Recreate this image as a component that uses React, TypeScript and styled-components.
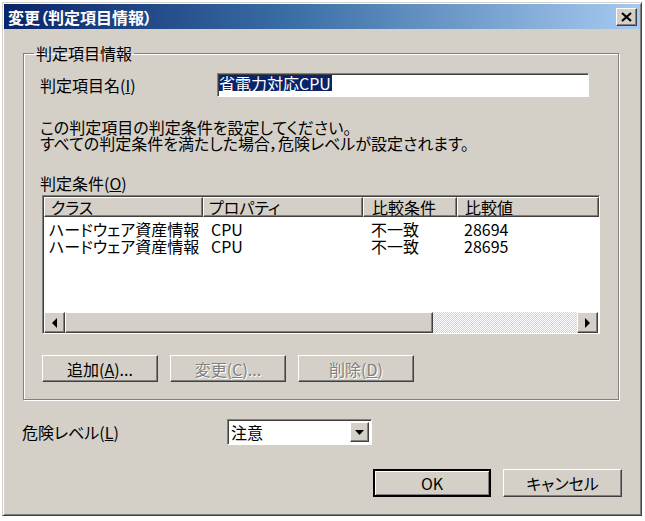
import React from 'react';
import styled, { createGlobalStyle, css } from 'styled-components';

const FONT = `"Noto Sans CJK JP", "Noto Sans", sans-serif`;

const GlobalStyle = createGlobalStyle`
  html, body {
    margin: 0;
    padding: 0;
    background: #ffffff;
  }
  body {
    font-family: ${FONT};
    font-size: 16px;
    font-feature-settings: "palt";
    color: #000;
  }
`;

const raised = css`
  border: 1px solid;
  border-color: #ffffff #404040 #404040 #ffffff;
  box-shadow: inset -1px -1px 0 #808080;
`;

const sunken = css`
  border: 1px solid;
  border-color: #808080 #ffffff #ffffff #808080;
  box-shadow: inset 1px 1px 0 #404040;
`;

const Window = styled.div`
  box-sizing: border-box;
  width: 640px;
  height: 514px;
  margin: 2px;
  padding: 1px;
  background: #d4d0c8;
  border: 1px solid;
  border-color: #d4d0c8 #404040 #404040 #d4d0c8;
  box-shadow: inset 1px 1px 0 #ffffff, inset -1px -1px 0 #808080;
  display: flex;
  flex-direction: column;
`;

const TitleBar = styled.div`
  height: 25px;
  display: flex;
  align-items: center;
  justify-content: space-between;
  padding: 0 3px 0 4px;
  background: linear-gradient(90deg, #0a246a 0%, #3a6ea5 45%, #a6caf0 100%);
`;

const TitleText = styled.span`
  color: #ffffff;
  font-weight: 700;
  font-size: 16px;
  line-height: 16px;
`;

const CloseButton = styled.div`
  box-sizing: border-box;
  width: 21px;
  height: 18px;
  background: #d4d0c8;
  ${raised};
  display: flex;
  align-items: center;
  justify-content: center;
`;

const Body = styled.div`
  flex: 1;
  display: flex;
  flex-direction: column;
`;

const Group = styled.fieldset`
  margin: 16px 21px 0 19px;
  padding: 12px 16px 17px 16px;
  border: 1px solid #808080;
  box-shadow: inset 1px 1px 0 #ffffff, 1px 1px 0 #ffffff;
  min-width: 0;
`;

const Legend = styled.legend`
  padding: 0 2px;
  margin-left: -6px;
  line-height: 16px;
`;

const FieldRow = styled.div`
  display: flex;
  align-items: center;
  height: 24px;
`;

const FieldLabel = styled.span<{ $w: number }>`
  width: ${p => p.$w}px;
  flex: none;
  line-height: 16px;
`;

const TextBox = styled.div`
  box-sizing: border-box;
  width: 372px;
  height: 24px;
  background: #ffffff;
  ${sunken};
  padding: 1px 0 0 1px;
  display: flex;
  align-items: flex-start;
`;

const Selected = styled.span`
  background: #0a246a;
  color: #ffffff;
  line-height: 16px;
  padding-right: 1px;
`;

const Description = styled.p`
  margin: 22px 0 0;
  line-height: 16px;
`;

const ListLabel = styled.div`
  margin-top: 24px;
  line-height: 16px;
`;

const ListView = styled.div`
  box-sizing: border-box;
  margin: 4px 0 0 2px;
  width: 558px;
  height: 139px;
  background: #ffffff;
  ${sunken};
  padding: 1px 0 0 1px;
  display: flex;
  flex-direction: column;
`;

const HeaderRow = styled.div`
  display: flex;
  height: 20px;
  flex: none;
  background: #d4d0c8;
`;

const HeaderCell = styled.div<{ $w?: number; $pad: number }>`
  box-sizing: border-box;
  ${p => (p.$w ? `width: ${p.$w}px; flex: none;` : 'flex: 1;')}
  ${raised};
  padding-left: ${p => p.$pad}px;
  line-height: 18px;
  white-space: nowrap;
`;

const ListBody = styled.div`
  flex: 1;
  padding-top: 4px;
`;

const Row = styled.div`
  display: flex;
  height: 17px;
`;

const Cell = styled.div<{ $w?: number; $pad: number }>`
  box-sizing: border-box;
  ${p => (p.$w ? `width: ${p.$w}px; flex: none;` : 'flex: 1;')}
  padding-left: ${p => p.$pad}px;
  line-height: 17px;
  white-space: nowrap;
`;

const HScroll = styled.div`
  display: flex;
  height: 21px;
  flex: none;
  margin-right: 1px;
`;

const ScrollButton = styled.div`
  box-sizing: border-box;
  width: 21px;
  background: #d4d0c8;
  ${raised};
  display: flex;
  align-items: center;
  justify-content: center;
`;

const Thumb = styled.div<{ $w: number }>`
  box-sizing: border-box;
  width: ${p => p.$w}px;
  background: #d4d0c8;
  ${raised};
`;

const Track = styled.div`
  flex: 1;
  background: repeating-conic-gradient(#ffffff 0 25%, #d4d0c8 0 50%) 0 0 / 2px 2px;
`;

const ButtonRow = styled.div`
  display: flex;
  gap: 12px;
  margin: 21px 0 0 2px;
`;

const Button = styled.div<{ $w: number; $h: number; $disabled?: boolean; $default?: boolean }>`
  box-sizing: border-box;
  width: ${p => p.$w}px;
  height: ${p => p.$h}px;
  background: #d4d0c8;
  display: flex;
  align-items: center;
  justify-content: center;
  line-height: 16px;
  ${raised};
  ${p =>
    p.$default &&
    css`
      border: 2px solid #000000;
      box-shadow: inset 1px 1px 0 #ffffff, inset -1px -1px 0 #808080;
    `}
  ${p =>
    p.$disabled &&
    css`
      color: #808080;
      text-shadow: 1px 1px 0 #ffffff;
    `}
`;

const LevelRow = styled.div`
  display: flex;
  align-items: center;
  margin: 19px 0 0 18px;
`;

const Combo = styled.div`
  box-sizing: border-box;
  width: 145px;
  height: 26px;
  background: #ffffff;
  ${sunken};
  padding: 2px 2px 2px 3px;
  display: flex;
  align-items: center;
  justify-content: space-between;
`;

const ComboButton = styled.div`
  box-sizing: border-box;
  width: 19px;
  height: 20px;
  background: #d4d0c8;
  ${raised};
  display: flex;
  align-items: center;
  justify-content: center;
`;

const Footer = styled.div`
  display: flex;
  justify-content: flex-end;
  gap: 12px;
  margin: 24px 18px 0 0;
`;

const Arrow = ({ dir }: { dir: 'left' | 'right' | 'down' }) => {
  const pts =
    dir === 'left' ? '5,0 5,10 0,5' : dir === 'right' ? '0,0 0,10 5,5' : '0,0 9,0 4.5,5';
  const w = dir === 'down' ? 9 : 5;
  const h = dir === 'down' ? 5 : 10;
  return (
    <svg width={w} height={h} viewBox={`0 0 ${w} ${h}`}>
      <polygon points={pts} fill="#000" />
    </svg>
  );
};

const columns = [
  { key: 'cls', label: 'クラス', w: 159, hpad: 6, pad: 5 },
  { key: 'prop', label: 'プロパティ', w: 160, hpad: 5, pad: 8 },
  { key: 'cmp', label: '比較条件', w: 94, hpad: 8, pad: 8 },
  { key: 'val', label: '比較値', w: undefined, hpad: 7, pad: 7 },
] as const;

const rows = [
  { cls: 'ハードウェア資産情報', prop: 'CPU', cmp: '不一致', val: '28694' },
  { cls: 'ハードウェア資産情報', prop: 'CPU', cmp: '不一致', val: '28695' },
];

const App: React.FC = () => (
  <>
    <GlobalStyle />
    <Window>
      <TitleBar>
        <TitleText>変更（判定項目情報）</TitleText>
        <CloseButton>
          <svg width="11" height="10" viewBox="0 0 11 10">
            <path d="M1 1 L10 9 M10 1 L1 9" stroke="#000" strokeWidth="2.2" />
          </svg>
        </CloseButton>
      </TitleBar>
      <Body>
        <Group>
          <Legend>判定項目情報</Legend>
          <FieldRow>
            <FieldLabel $w={177}>
              判定項目名(<u>I</u>)
            </FieldLabel>
            <TextBox>
              <Selected>省電力対応CPU</Selected>
            </TextBox>
          </FieldRow>
          <Description>
            この判定項目の判定条件を設定してください。
            <br />
            すべての判定条件を満たした場合，危険レベルが設定されます。
          </Description>
          <ListLabel>
            判定条件(<u>O</u>)
          </ListLabel>
          <ListView>
            <HeaderRow>
              {columns.map(c => (
                <HeaderCell key={c.key} $w={c.w} $pad={c.hpad}>
                  {c.label}
                </HeaderCell>
              ))}
            </HeaderRow>
            <ListBody>
              {rows.map((r, i) => (
                <Row key={i}>
                  {columns.map(c => (
                    <Cell key={c.key} $w={c.w} $pad={c.pad}>
                      {r[c.key]}
                    </Cell>
                  ))}
                </Row>
              ))}
            </ListBody>
            <HScroll>
              <ScrollButton>
                <Arrow dir="left" />
              </ScrollButton>
              <Thumb $w={368} />
              <Track />
              <ScrollButton>
                <Arrow dir="right" />
              </ScrollButton>
            </HScroll>
          </ListView>
          <ButtonRow>
            <Button $w={116} $h={27}>
              追加(<u>A</u>)...
            </Button>
            <Button $w={116} $h={27} $disabled>
              変更(<u>C</u>)...
            </Button>
            <Button $w={116} $h={27} $disabled>
              削除(<u>D</u>)
            </Button>
          </ButtonRow>
        </Group>
        <LevelRow>
          <FieldLabel $w={205}>
            危険レベル(<u>L</u>)
          </FieldLabel>
          <Combo>
            <span>注意</span>
            <ComboButton>
              <Arrow dir="down" />
            </ComboButton>
          </Combo>
        </LevelRow>
        <Footer>
          <Button $w={118} $h={28} $default>
            OK
          </Button>
          <Button $w={119} $h={28}>
            キャンセル
          </Button>
        </Footer>
      </Body>
    </Window>
  </>
);

export default App;
